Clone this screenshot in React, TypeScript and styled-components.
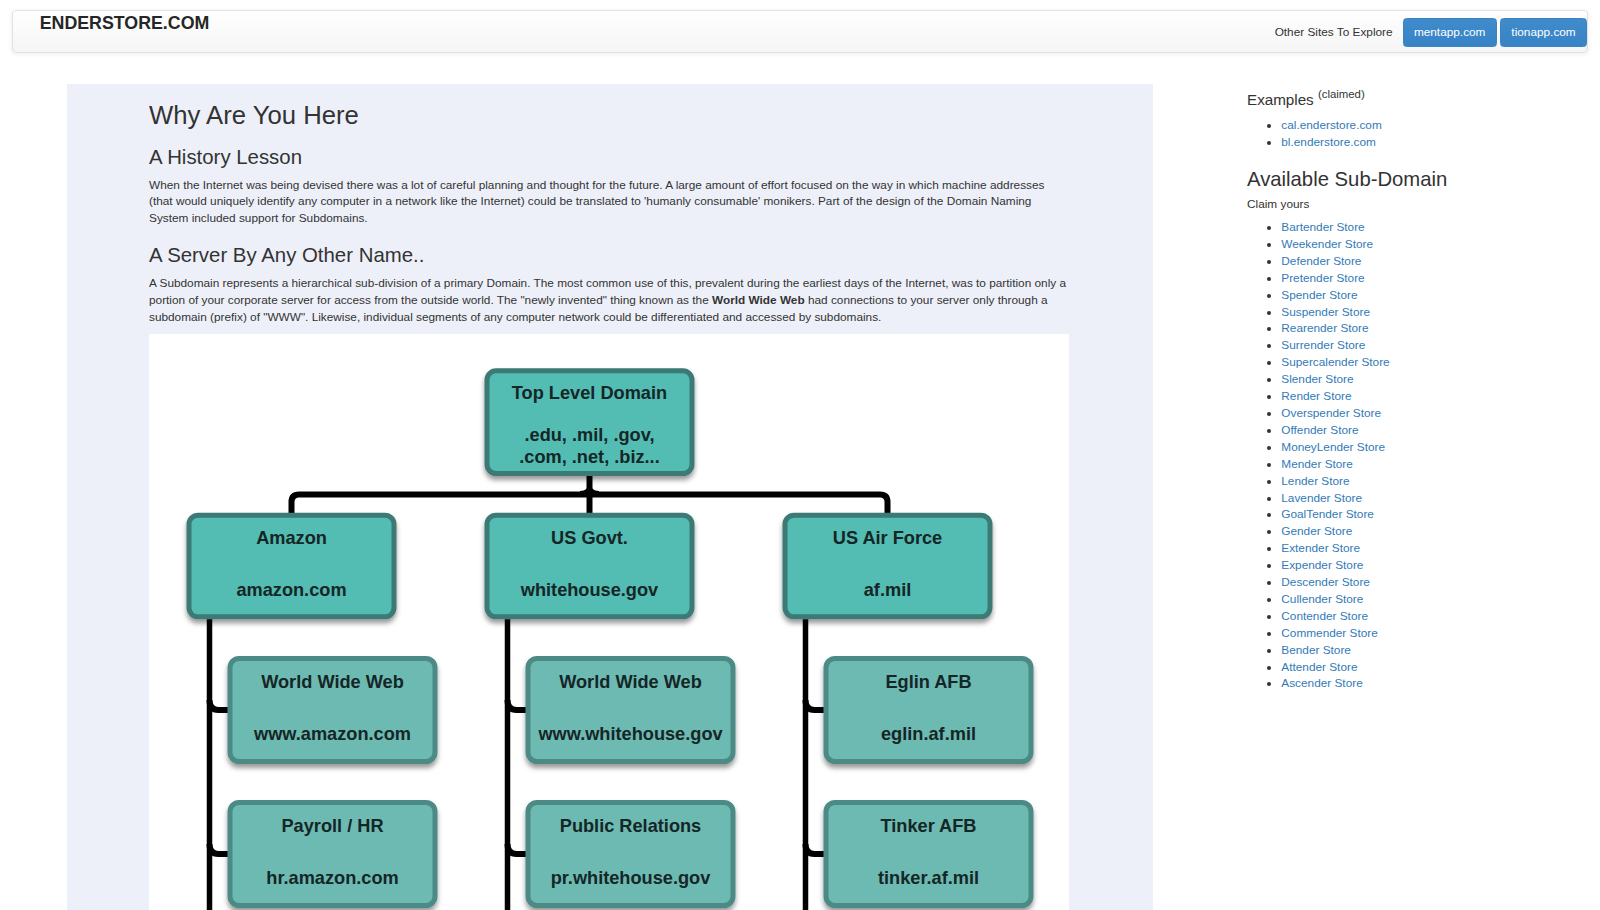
import React from "react";
import styled, { createGlobalStyle } from "styled-components";

const GlobalStyle = createGlobalStyle`
  html, body { margin: 0; padding: 0; background: #ffffff; overflow: hidden; }
  body {
    font-family: "Liberation Sans", Arial, Helvetica, sans-serif;
    font-size: 11.82px;
    line-height: 16.9px;
    color: #333333;
  }
  * { box-sizing: border-box; }
`;

const Page = styled.div`
  padding-top: 10px;
`;

const Navbar = styled.nav`
  display: flex;
  align-items: stretch;
  justify-content: space-between;
  height: 43.3px;
  margin: 0 12px 0 11.5px;
  background: linear-gradient(to bottom, #ffffff 0%, #f5f5f5 100%);
  border: 1px solid #e2e2e2;
  border-radius: 4px;
  box-shadow: inset 0 1px 0 rgba(255, 255, 255, 0.15), 0 1px 5px rgba(0, 0, 0, 0.075);
`;

const Brand = styled.a`
  display: block;
  padding: 2px 0 0 27.2px;
  font-size: 17.8px;
  line-height: 20px;
  font-weight: 700;
  color: #262626;
  text-decoration: none;
  text-shadow: 0 1px 0 rgba(255, 255, 255, 0.25);
`;

const NavRight = styled.div`
  display: flex;
  align-items: center;
  gap: 3.3px;
  padding-top: 1.6px;
`;

const NavText = styled.span`
  margin-right: 6.7px;
  font-size: 11.82px;
  color: #333333;
`;

const NavButton = styled.a`
  display: flex;
  align-items: center;
  height: 28.3px;
  padding: 0 10.3px;
  border-radius: 3.4px;
  background: linear-gradient(to bottom, #3f8bcc 0%, #3883c5 100%);
  border: 1px solid #3a84c4;
  color: #ffffff;
  font-size: 11.82px;
  text-decoration: none;
`;

const Main = styled.div`
  display: flex;
  align-items: flex-start;
  margin-top: 30.3px;
`;

const Panel = styled.section`
  flex: none;
  width: 1086px;
  margin-left: 67px;
  padding: 17.1px 84px 0 82px;
  background: #eef0f9;
`;

const PageTitle = styled.h2`
  margin: 0 0 8.6px;
  font-size: 25.7px;
  line-height: 1.1;
  font-weight: 500;
  color: #333333;
`;

const SectionTitle = styled.h3`
  margin: 16.6px 0 8.6px;
  font-size: 20.4px;
  line-height: 1.1;
  font-weight: 500;
  color: #333333;
`;

const Para = styled.p`
  margin: 0 0 8.6px;
`;

const DiagramFrame = styled.div`
  width: 100%;
  background: #ffffff;
  svg {
    display: block;
  }
`;

const Sidebar = styled.aside`
  flex: 1;
  margin-left: 94px;
`;

const SideTitle = styled.h4`
  margin: 8.6px 0 8.4px;
  font-size: 15.2px;
  line-height: 1.1;
  font-weight: 500;
  color: #333333;
  sup {
    font-size: 75%;
    line-height: 0;
    position: relative;
    vertical-align: baseline;
    top: -0.65em;
  }
`;

const SideHeading = styled.h3`
  margin: 17.1px 0 5px;
  font-size: 20.3px;
  line-height: 1.1;
  font-weight: 500;
  color: #333333;
`;

const SideNote = styled.p`
  margin: 0 0 6.6px;
`;

const LinkList = styled.ul`
  margin: 0 0 8.6px;
  padding-left: 34.3px;
  list-style: disc;
`;

const LinkItem = styled.li`
  line-height: 16.9px;
  a {
    color: #337ab7;
    text-decoration: none;
  }
`;

type NodeProps = {
  x: number;
  y: number;
  h: number;
  lines: { text: string; dy: number }[];
  child?: boolean;
};

const NODE_W = 210;

function DiagramNode({ x, y, h, lines, child }: NodeProps) {
  return (
    <g>
      <rect
        x={x + 2.5}
        y={y + 2.5}
        width={NODE_W - 5}
        height={h - 5}
        rx={9}
        ry={9}
        fill={child ? "#6dbab3" : "#53bcb3"}
        stroke={child ? "#4b8a85" : "#3a7a74"}
        strokeWidth={5}
        filter="url(#nodeShadow)"
      />
      {lines.map((l) => (
        <text
          key={l.text}
          x={x + NODE_W / 2}
          y={y + l.dy}
          textAnchor="middle"
          fontFamily="'Liberation Sans', Arial, sans-serif"
          fontWeight={700}
          fontSize={18.2}
          fill="#152626"
        >
          {l.text}
        </text>
      ))}
    </g>
  );
}

const parents = [
  {
    x: 37.5,
    title: "Amazon",
    sub: "amazon.com",
    kids: [
      ["World Wide Web", "www.amazon.com"],
      ["Payroll / HR", "hr.amazon.com"],
    ],
  },
  {
    x: 335.5,
    title: "US Govt.",
    sub: "whitehouse.gov",
    kids: [
      ["World Wide Web", "www.whitehouse.gov"],
      ["Public Relations", "pr.whitehouse.gov"],
    ],
  },
  {
    x: 633.5,
    title: "US Air Force",
    sub: "af.mil",
    kids: [
      ["Eglin AFB", "eglin.af.mil"],
      ["Tinker AFB", "tinker.af.mil"],
    ],
  },
];

const PARENT_Y = 178.7;
const PARENT_H = 106.6;
const CHILD_ROWS = [322, 466];
const CHILD_H = 108;

function DomainDiagram() {
  return (
    <svg width="100%" height="620" viewBox="0 0 920 620" preserveAspectRatio="xMinYMin meet">
      <defs>
        <filter id="nodeShadow" x="-10%" y="-10%" width="120%" height="135%">
          <feDropShadow dx="0" dy="4" stdDeviation="2.8" floodColor="#000000" floodOpacity="0.4" />
        </filter>
      </defs>

      {/* main connectors */}
      <path
        d="M142.5 180 V168 Q142.5 160.5 150 160.5 H731 Q738.5 160.5 738.5 168 V180"
        fill="none"
        stroke="#000"
        strokeWidth={6}
      />
      <path d="M440.5 140 V180" fill="none" stroke="#000" strokeWidth={6} />
      <path d="M431 158 Q440.5 158 440.5 148 Q440.5 158 450 158 Z" fill="#000" stroke="#000" strokeWidth={2} />

      {/* child trunks and branches */}
      {parents.map((p) => {
        const lx = p.x + 23;
        const cl = p.x + 41;
        return (
          <g key={p.title + "-lines"}>
            <path d={`M${lx} 283 V640`} fill="none" stroke="#000" strokeWidth={5.5} />
            {CHILD_ROWS.map((ry) => {
              const cy = ry + CHILD_H / 2;
              return (
                <path
                  key={ry}
                  d={`M${lx} ${cy - 10} Q${lx} ${cy} ${lx + 9} ${cy} H${cl + 3}`}
                  fill="none"
                  stroke="#000"
                  strokeWidth={6}
                />
              );
            })}
          </g>
        );
      })}

      <DiagramNode
        x={335.5}
        y={34.3}
        h={107.7}
        lines={[
          { text: "Top Level Domain", dy: 31 },
          { text: ".edu, .mil, .gov,", dy: 73 },
          { text: ".com, .net, .biz...", dy: 94.7 },
        ]}
      />

      {parents.map((p) => (
        <g key={p.title}>
          <DiagramNode
            x={p.x}
            y={PARENT_Y}
            h={PARENT_H}
            lines={[
              { text: p.title, dy: 31.3 },
              { text: p.sub, dy: 83 },
            ]}
          />
          {p.kids.map((k, i) => (
            <DiagramNode
              key={k[1]}
              child
              x={p.x + 41}
              y={CHILD_ROWS[i]}
              h={CHILD_H}
              lines={[
                { text: k[0], dy: 31.7 },
                { text: k[1], dy: 83.5 },
              ]}
            />
          ))}
        </g>
      ))}
    </svg>
  );
}

const examples = ["cal.enderstore.com", "bl.enderstore.com"];

const stores = [
  "Bartender Store",
  "Weekender Store",
  "Defender Store",
  "Pretender Store",
  "Spender Store",
  "Suspender Store",
  "Rearender Store",
  "Surrender Store",
  "Supercalender Store",
  "Slender Store",
  "Render Store",
  "Overspender Store",
  "Offender Store",
  "MoneyLender Store",
  "Mender Store",
  "Lender Store",
  "Lavender Store",
  "GoalTender Store",
  "Gender Store",
  "Extender Store",
  "Expender Store",
  "Descender Store",
  "Cullender Store",
  "Contender Store",
  "Commender Store",
  "Bender Store",
  "Attender Store",
  "Ascender Store",
];

export default function App() {
  return (
    <Page>
      <GlobalStyle />
      <Navbar>
        <Brand href="#">ENDERSTORE.COM</Brand>
        <NavRight>
          <NavText>Other Sites To Explore</NavText>
          <NavButton href="#">mentapp.com</NavButton>
          <NavButton href="#">tionapp.com</NavButton>
        </NavRight>
      </Navbar>
      <Main>
        <Panel>
          <PageTitle>Why Are You Here</PageTitle>
          <SectionTitle>A History Lesson</SectionTitle>
          <Para>
            When the Internet was being devised there was a lot of careful planning and thought for the future. A large
            amount of effort focused on the way in which machine addresses (that would uniquely identify any computer in a
            network like the Internet) could be translated to 'humanly consumable' monikers. Part of the design of the
            Domain Naming System included support for Subdomains.
          </Para>
          <SectionTitle>A Server By Any Other Name..</SectionTitle>
          <Para>
            A Subdomain represents a hierarchical sub-division of a primary Domain. The most common use of this, prevalent
            during the earliest days of the Internet, was to partition only a portion of your corporate server for access
            from the outside world. The "newly invented" thing known as the <b>World Wide Web</b> had connections to your
            server only through a subdomain (prefix) of "WWW". Likewise, individual segments of any computer network could
            be differentiated and accessed by subdomains.
          </Para>
          <DiagramFrame>
            <DomainDiagram />
          </DiagramFrame>
        </Panel>
        <Sidebar>
          <SideTitle>
            Examples <sup>(claimed)</sup>
          </SideTitle>
          <LinkList>
            {examples.map((e) => (
              <LinkItem key={e}>
                <a href="#">{e}</a>
              </LinkItem>
            ))}
          </LinkList>
          <SideHeading>Available Sub-Domain</SideHeading>
          <SideNote>Claim yours</SideNote>
          <LinkList>
            {stores.map((s) => (
              <LinkItem key={s}>
                <a href="#">{s}</a>
              </LinkItem>
            ))}
          </LinkList>
        </Sidebar>
      </Main>
    </Page>
  );
}
